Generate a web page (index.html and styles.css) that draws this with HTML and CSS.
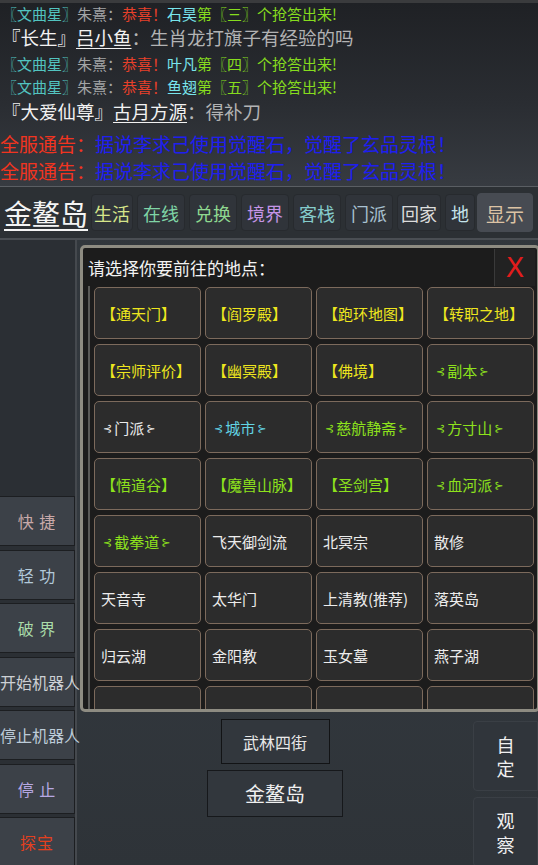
FILE: index.html
```html
<!DOCTYPE html>
<html lang="zh-CN">
<head>
    <meta charset="utf-8" />
    <title>金鳌岛</title>
    <link rel="stylesheet" href="styles.css">
</head>
<body>
    <div id="chat">
        <div class="line small l1"><span class="c-title">〖文曲星〗</span><span class="c-grey">朱熹：</span><span class="c-red">恭喜！</span><span class="c-cyan">石昊</span><span class="c-green">第〖三〗个抢答出来!</span></div>
        <div class="line big l2"><span class="c-white">『长生』</span><span class="c-white u">吕小鱼</span><span class="c-grey2">：生肖龙打旗子有经验的吗</span></div>
        <div class="line small l3"><span class="c-title">〖文曲星〗</span><span class="c-grey">朱熹：</span><span class="c-red">恭喜！</span><span class="c-cyan">叶凡</span><span class="c-green">第〖四〗个抢答出来!</span></div>
        <div class="line small l4"><span class="c-title">〖文曲星〗</span><span class="c-grey">朱熹：</span><span class="c-red">恭喜！</span><span class="c-cyan">鱼翅</span><span class="c-green">第〖五〗个抢答出来!</span></div>
        <div class="line big l5"><span class="c-white">『大爱仙尊』</span><span class="c-white u">古月方源</span><span class="c-grey2">：得补刀</span></div>
        <div class="line notice l6"><span class="c-alert">全服通告：</span><span class="c-blue">据说李求己使用觉醒石，觉醒了玄品灵根！</span></div>
        <div class="line notice l7"><span class="c-alert">全服通告：</span><span class="c-blue">据说李求己使用觉醒石，觉醒了玄品灵根！</span></div>
    </div>

    <div id="tabbar">
        <span class="place">金鳌岛</span>
        <div class="tabs">
            <span class="tab t-life">生活</span>
            <span class="tab t-online">在线</span>
            <span class="tab t-swap">兑换</span>
            <span class="tab t-realm">境界</span>
            <span class="tab t-inn">客栈</span>
            <span class="tab t-sect">门派</span>
            <span class="tab t-home">回家</span>
            <span class="tab t-map">地</span>
            <span class="tab t-show">显示</span>
        </div>
    </div>

    <div id="main">
        <div class="side">
            <div class="sbtn s-quick">快&nbsp;捷</div>
            <div class="sbtn s-fly">轻&nbsp;功</div>
            <div class="sbtn s-break">破&nbsp;界</div>
            <div class="sbtn s-bot">开始机器人</div>
            <div class="sbtn s-bot2">停止机器人</div>
            <div class="sbtn s-stop">停&nbsp;止</div>
            <div class="sbtn s-treasure">探宝</div>
        </div>
        <div class="center">
            <div class="street">武林四街</div>
            <div class="island">金鳌岛</div>
        </div>
        <div class="right">
            <div class="rbtn"><span>自</span><span>定</span></div>
            <div class="rbtn"><span>观</span><span>察</span></div>
        </div>

        <div class="dialog">
            <div class="dlg-head">
                <span class="dlg-title">请选择你要前往的地点：</span>
                <span class="close">X</span>
            </div>
            <div class="places">
                <div class="cell yellow">【通天门】</div>
                <div class="cell yellow">【阎罗殿】</div>
                <div class="cell yellow">【跑环地图】</div>
                <div class="cell yellow">【转职之地】</div>
                <div class="cell yellow">【宗师评价】</div>
                <div class="cell yellow">【幽冥殿】</div>
                <div class="cell yellow">【佛境】</div>
                <div class="cell green"><i>⊰</i>副本<i>⊱</i></div>
                <div class="cell white"><i>⊰</i>门派<i>⊱</i></div>
                <div class="cell cyan"><i>⊰</i>城市<i>⊱</i></div>
                <div class="cell green"><i>⊰</i>慈航静斋<i>⊱</i></div>
                <div class="cell green"><i>⊰</i>方寸山<i>⊱</i></div>
                <div class="cell green">【悟道谷】</div>
                <div class="cell green">【魔兽山脉】</div>
                <div class="cell green">【圣剑宫】</div>
                <div class="cell green"><i>⊰</i>血河派<i>⊱</i></div>
                <div class="cell green"><i>⊰</i>截拳道<i>⊱</i></div>
                <div class="cell white">飞天御剑流</div>
                <div class="cell white">北冥宗</div>
                <div class="cell white">散修</div>
                <div class="cell white">天音寺</div>
                <div class="cell white">太华门</div>
                <div class="cell white">上清教(推荐)</div>
                <div class="cell white">落英岛</div>
                <div class="cell white">归云湖</div>
                <div class="cell white">金阳教</div>
                <div class="cell white">玉女墓</div>
                <div class="cell white">燕子湖</div>
                <div class="cell white"></div>
                <div class="cell white"></div>
                <div class="cell white"></div>
                <div class="cell white"></div>
            </div>
        </div>
    </div>
</body>
</html>
```

FILE: styles.css
```css
body { margin:0; width:538px; height:865px; overflow:hidden; font-family:"Noto Sans CJK SC", "DejaVu Sans", sans-serif; background:linear-gradient(180deg, #2f3439 0%, #343a40 60%, #2e3338 100%); }

/* chat log */
#chat { height:187px; background:linear-gradient(180deg, #1f2125 0%, #2a2d32 55%, #373b41 100%); border-top:3px solid #3a3b3d; box-sizing:border-box; border-bottom:1px solid #5a5e63; }
.line { white-space:nowrap; padding-left:2px; }
.small { font-size:15px; height:23px; line-height:23px; }
.big { font-size:18.5px; height:27px; line-height:27px; }
.notice { font-size:19px; height:27px; line-height:27px; padding-left:0; }
.l1 { height:21px; line-height:21px; }
.l2 { height:28px; }
.l5 { height:28px; margin-bottom:4px; }
.u { text-decoration:underline; text-underline-offset:3px; }
.c-title { color:#52c4c0; }
.c-grey { color:#a3a5a6; }
.c-grey2 { color:#b2b3b4; }
.c-red { color:#e8402a; }
.c-cyan { color:#78e4ec; }
.c-green { color:#86dc1e; }
.c-white { color:#f2f2f2; }
.c-alert { color:#f23420; }
.c-blue { color:#1e1ef2; }

/* tab strip */
#tabbar { height:53px; display:flex; align-items:center; background:#2c3034; border-bottom:2px solid #4a4e53; box-sizing:border-box; overflow:hidden; white-space:nowrap; }
.place { flex-shrink:0; color:#f4f4f4; font-size:28px; text-decoration:underline; text-underline-offset:4px; text-decoration-thickness:2px; padding:0 3px 0 4px; }
.tabs { display:flex; gap:4px; align-items:center; flex-shrink:0; }
.tab { flex-shrink:0; height:37px; line-height:37px; padding:0 3px; font-size:18px; background:#30343a; border:1px solid #272a2e; border-radius:4px; box-sizing:border-box; }
.t-life { color:#d6e58a; padding:0 2px; }
.t-online { color:#7fd4a6; padding:0 5px; }
.t-swap { color:#8ed890; padding:0 5px; }
.t-realm { color:#c594e6; padding:0 5px; }
.t-inn { color:#85cccc; padding:0 5px; }
.t-sect { color:#a9c2d2; padding:0 5px; }
.t-home { color:#dcdcdc; padding:0 3px; }
.t-map { color:#c6e4ea; padding:0 5px; }
.t-show { color:#dcc3a4; background:#474b52; border-color:#474b52; font-size:19px; padding:0 8px; height:39px; line-height:39px; margin-left:-2px; }

/* lower area */
#main { position:relative; height:625px; display:grid; grid-template-columns:77px 1fr 65px; }
.side { background:#2b2f34; border-right:2px solid #45494e; display:flex; flex-direction:column; justify-content:flex-end; gap:3.5px; }
.sbtn { height:50px; box-sizing:border-box; display:flex; align-items:center; justify-content:center; background:#3c4148; border:1px solid #1c1e21; border-left:none; font-size:16px; white-space:nowrap; letter-spacing:1px; }
.s-quick { color:#c9a9a9; }
.s-fly { color:#b2c9da; }
.s-break { color:#a9dba9; }
.s-bot { color:#cdd0d4; letter-spacing:0; justify-content:flex-start; }
.s-bot2 { color:#bccbd8; letter-spacing:0; justify-content:flex-start; }
.s-stop { color:#b7a8e3; }
.s-treasure { color:#e4401e; }

.center { display:flex; flex-direction:column; align-items:center; padding-top:479px; gap:6px; }
.street { width:109px; height:45px; display:flex; align-items:center; justify-content:center; background:#32373d; border:1px solid #121315; box-sizing:border-box; color:#e8e8e8; font-size:16px; }
.island { width:136px; height:47px; display:flex; align-items:center; justify-content:center; background:#32373d; border:1px solid #16181b; box-sizing:border-box; color:#f0f0f0; font-size:20px; }

.right { display:flex; flex-direction:column; padding-top:481px; gap:6px; }
.rbtn { height:70px; box-sizing:border-box; display:flex; flex-direction:column; align-items:center; justify-content:center; background:#30353b; border:1px solid #3a3f45; border-radius:4px 0 0 4px; color:#f0f0f0; font-size:18px; line-height:24px; }

/* location chooser */
.dialog { position:absolute; left:80px; top:5px; width:460px; height:467px; box-sizing:border-box; border:3px solid #8e8c82; border-radius:5px; background:#1c1c1c; }
.dlg-head { height:38px; display:flex; align-items:center; justify-content:space-between; }
.dlg-title { color:#f2f2f2; font-size:17px; padding-left:5px; }
.close { width:40px; height:37px; display:flex; align-items:center; justify-content:center; background:#222; border-left:1px solid #3a3a3a; color:#e21c1c; font-size:27px; font-family:"DejaVu Sans", sans-serif; margin-right:2px; }
.places { margin-left:5px; border-left:2px solid #5a5a58; padding:1px 0 0 4px; height:422px; overflow:hidden; display:grid; grid-template-columns:repeat(4, 107px); grid-auto-rows:52px; gap:5px 4px; }
.cell { background:#2c2c2c; border:1.5px solid #7c6a5c; border-radius:5px; display:flex; align-items:center; padding-left:6px; font-size:15px; white-space:nowrap; overflow:hidden; }
.cell i { font-style:normal; font-size:11px; margin:0 2px; }
.yellow { color:#eee61e; }
.green { color:#8ee21c; }
.white { color:#ececec; }
.cyan { color:#62d4e4; }
```
